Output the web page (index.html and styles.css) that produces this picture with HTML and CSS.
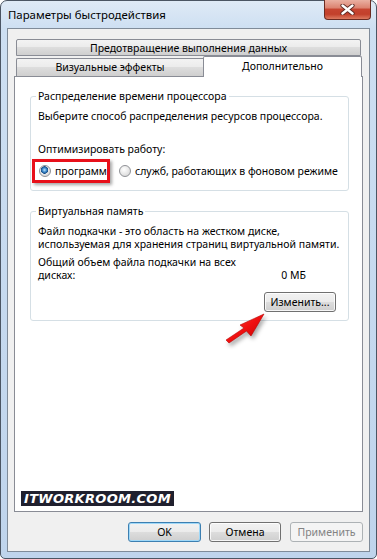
FILE: index.html
```html
<!DOCTYPE html>
<html lang="ru">
<head>
<meta charset="utf-8">
<title>Параметры быстродействия</title>
<link rel="stylesheet" href="styles.css">
</head>
<body>
<div class="window">
  <div class="titlebar">
    <span class="title">Параметры быстродействия</span>
    <div class="close">
      <svg width="15" height="11" viewBox="0 0 15 11">
        <path d="M2.5 1.5 L12.5 9.5 M12.5 1.5 L2.5 9.5" stroke="#5a2620" stroke-width="4.2" stroke-linecap="round"/>
        <path d="M2.5 1.5 L12.5 9.5 M12.5 1.5 L2.5 9.5" stroke="#ffffff" stroke-width="2.4" stroke-linecap="round"/>
      </svg>
    </div>
  </div>
  <div class="client">
    <div class="tabrow1">
      <div class="tab tab-wide">Предотвращение выполнения данных</div>
    </div>
    <div class="tabrow2">
      <div class="tab tab-vis">Визуальные эффекты</div>
      <div class="tab tab-sel">Дополнительно</div>
    </div>
    <div class="panel">
      <fieldset class="group g1">
        <legend>Распределение времени процессора</legend>
        <p class="line first">Выберите способ распределения ресурсов процессора.</p>
        <p class="line opt-label">Оптимизировать работу:</p>
        <div class="radios">
          <span class="highlight"><span class="radio checked"></span>программ</span>
          <span class="option"><span class="radio"></span>служб, работающих в фоновом режиме</span>
        </div>
      </fieldset>
      <fieldset class="group g2">
        <legend>Виртуальная память</legend>
        <p class="para first">Файл подкачки - это область на жестком диске,<br>используемая для хранения страниц виртуальной памяти.</p>
        <div class="para total">
          <div>Общий объем файла подкачки на всех</div>
          <div class="total-row"><span>дисках:</span><span class="value">0 МБ</span></div>
        </div>
        <div class="change-row"><button class="btn change">Изменить...</button></div>
      </fieldset>
      <div class="spacer"></div>
      <div class="watermark">ITWORKROOM.COM</div>
    </div>
    <div class="buttons">
      <button class="btn ok">OK</button>
      <button class="btn cancel">Отмена</button>
      <button class="btn apply" disabled>Применить</button>
    </div>
  </div>
  <svg class="arrow" width="50" height="42" viewBox="0 0 50 42">
    <defs>
      <linearGradient id="ag" x1="0" y1="0" x2="1" y2="1">
        <stop offset="0" stop-color="#ff4a3a"/>
        <stop offset="0.5" stop-color="#f01010"/>
        <stop offset="1" stop-color="#c00000"/>
      </linearGradient>
    </defs>
    <polygon points="44,6 20,17 24,20 6,32 9,35 26.5,23 31,28" fill="url(#ag)" stroke="#b80000" stroke-width="0.6" stroke-linejoin="round"/>
  </svg>
</div>
</body>
</html>
```
FILE: styles.css
```css
* { box-sizing: border-box; }

html, body {
  margin: 0;
  padding: 0;
  background: #ffffff;
}

body {
  font-family: "Noto Sans", "Open Sans", sans-serif;
  font-size: 10.5px;
  color: #000;
  white-space: nowrap;
}

.window {
  position: relative;
  width: 377px;
  height: 559px;
  border: 1px solid #4b5563;
  border-radius: 7px 7px 5px 5px;
  background: linear-gradient(#dfeaf6 0px, #cddff2 28px, #bfd4ec 100%);
  padding: 0 6px 6px 6px;
  display: flex;
  flex-direction: column;
}

.titlebar {
  height: 27px;
  display: flex;
  justify-content: space-between;
  align-items: flex-start;
}

.title {
  margin-left: 1px;
  margin-top: 6px;
  font-size: 11.4px;
  line-height: 16px;
}

.close {
  width: 47px;
  height: 20px;
  margin-top: -1px;
  margin-right: -1px;
  border: 1px solid #6b2b22;
  border-top: none;
  border-radius: 0 0 4px 4px;
  background: linear-gradient(#eab0a2 0%, #dc8472 40%, #c64430 50%, #c2402b 75%, #dc7a60 100%);
  display: flex;
  align-items: center;
  justify-content: center;
}

.client {
  flex: 1;
  border: 1px solid #7f8b99;
  background: #f0f0f0;
  padding: 10px 0 9px 0;
  display: flex;
  flex-direction: column;
}

.tab {
  border: 1px solid #898c95;
  background: linear-gradient(#f3f3f3 0%, #ebebeb 50%, #dddddd 50%, #cfcfcf 100%);
  text-align: center;
}

.tabrow1 {
  margin: 0 8px;
  height: 17px;
  display: flex;
}

.tab-wide {
  flex: 1;
  line-height: 16px;
  border-radius: 2px 2px 0 0;
}

.tabrow2 {
  margin: 0 6px 0 8px;
  height: 20px;
  display: flex;
  align-items: flex-end;
}

.tab-vis {
  width: 187px;
  height: 18px;
  border-bottom: none;
  border-right: none;
  line-height: 17px;
  border-radius: 2px 0 0 0;
}

.tab-sel {
  position: relative;
  z-index: 1;
  width: 159px;
  height: 21px;
  margin-bottom: -1px;
  background: #ffffff;
  border-bottom: none;
  line-height: 18px;
  border-radius: 2px 2px 0 0;
}

.panel {
  flex: 1;
  margin: 0 6px;
  background: #ffffff;
  border: 1px solid #898c95;
  display: flex;
  flex-direction: column;
}

.group {
  margin: 12px 12px 0 15px;
  width: 319px;
  border: 1px solid #d5dfe5;
  border-radius: 3px;
  padding: 0 7px 7px 7px;
  min-width: 0;
}

.group legend {
  padding: 0 2px;
  margin-left: -2px;
  line-height: 14px;
}

.line {
  margin: 0;
  line-height: 14px;
}

.g1 .first { margin-top: 6px; }
.g1 .opt-label { margin-top: 19px; }

.radios {
  margin-top: 3px;
  display: flex;
  align-items: center;
}

.highlight {
  display: flex;
  align-items: center;
  height: 24px;
  width: 78px;
  margin-left: -6px;
  padding-left: 4px;
  border: 3px solid #e8101a;
  box-shadow: 2px 2px 3px rgba(0, 0, 0, 0.35);
}

.option {
  display: flex;
  align-items: center;
  margin-left: 9px;
}

.radio {
  width: 12px;
  height: 12px;
  border-radius: 50%;
  border: 1px solid #8f9196;
  background: radial-gradient(circle at 40% 35%, #ffffff 0%, #e6e6e6 55%, #cfcfcf 100%);
  margin-right: 4px;
  flex: none;
}

.radio.checked {
  background:
    radial-gradient(circle at 45% 40%, #bfe6fb 0px, #3f8ccd 2px, #164d86 3.5px, transparent 4px),
    radial-gradient(circle at 40% 35%, #ffffff 0%, #e6e6e6 55%, #cfcfcf 100%);
}

.g2 { margin-top: 13px; padding-bottom: 8px; }

.para {
  margin: 0;
  line-height: 13px;
}

.g2 .first { margin-top: 7px; }
.g2 .total { margin-top: 5px; }

.total-row {
  display: flex;
  justify-content: space-between;
  padding-right: 35px;
}

.change-row {
  display: flex;
  justify-content: flex-end;
  margin-top: 10px;
  padding-right: 5px;
}

.btn {
  font-family: "Noto Sans", "Open Sans", sans-serif;
  font-size: 10.5px;
  color: #000;
  height: 20px;
  padding: 0;
  border: 1px solid #707070;
  border-radius: 3px;
  background: linear-gradient(#f2f2f2 0%, #ebebeb 50%, #dddddd 50%, #cfcfcf 100%);
  box-shadow: inset 0 0 0 1px rgba(255, 255, 255, 0.8);
  line-height: 17px;
}

.change { width: 72px; }

.spacer { flex: 1; }

.watermark {
  align-self: flex-start;
  margin: 0 0 5px 6px;
  height: 15px;
  padding: 0 3px;
  background: #20202e;
  color: #ffffff;
  font-family: "DejaVu Sans", Verdana, sans-serif;
  font-weight: bold;
  font-style: italic;
  font-size: 13px;
  line-height: 15px;
  letter-spacing: 0.3px;
}

.buttons {
  margin: 10px 6px 0 0;
  display: flex;
  justify-content: flex-end;
}

.ok {
  width: 73px;
  border-color: #3c7fb1;
  box-shadow: inset 0 0 0 1px #9fd8f8;
}

.cancel {
  width: 72px;
  margin-left: 8px;
}

.apply {
  width: 73px;
  margin-left: 9px;
  border-color: #adb2b5;
  background: #f4f4f4;
  color: #838383;
  box-shadow: none;
}

.arrow {
  position: absolute;
  left: 219px;
  top: 307px;
  filter: drop-shadow(2px 3px 2px rgba(0, 0, 0, 0.35));
}
```
